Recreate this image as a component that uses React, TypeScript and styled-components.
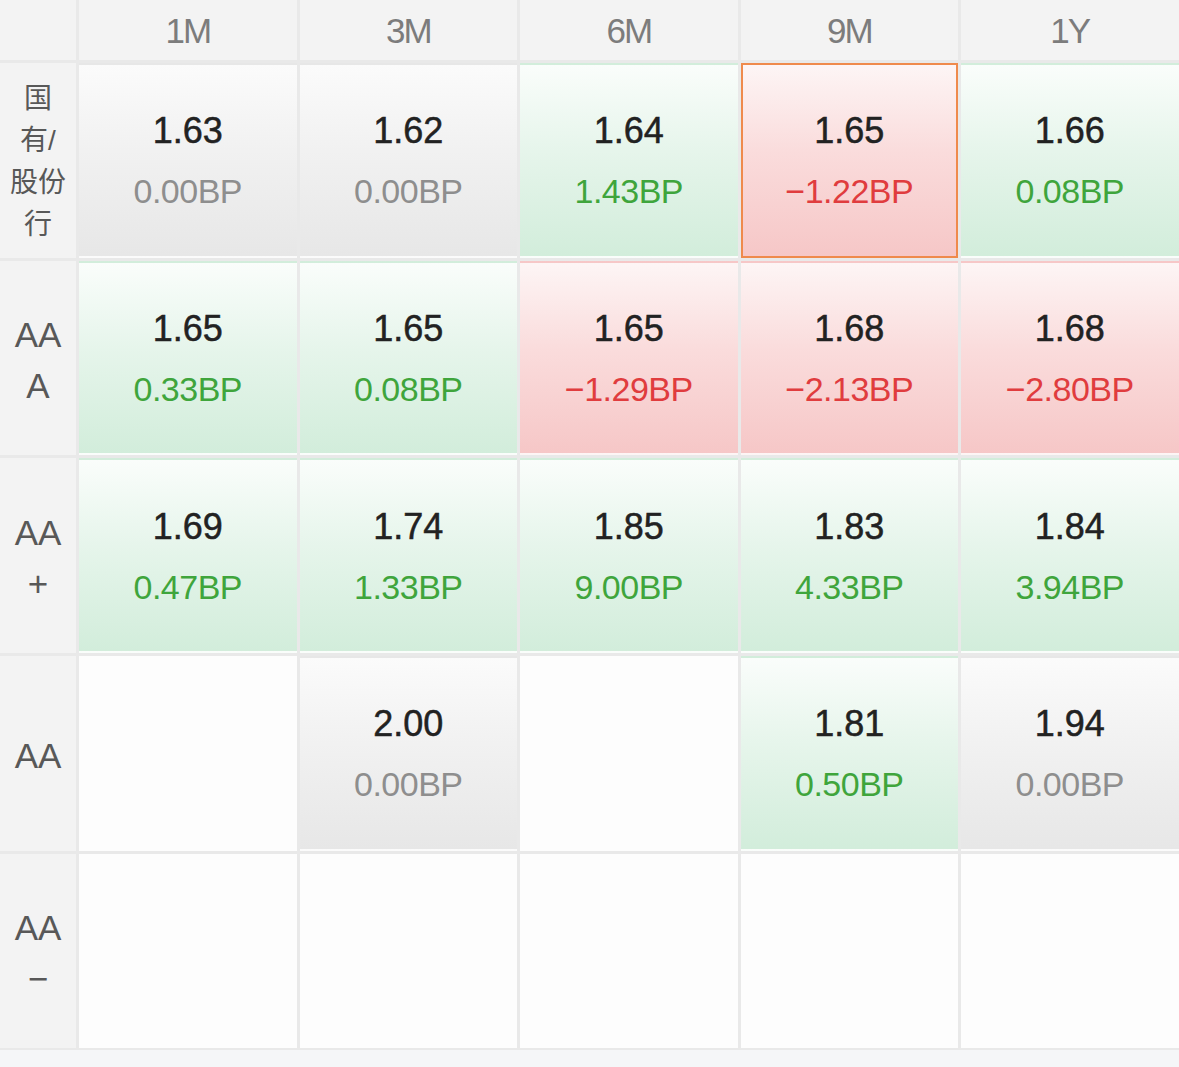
import React from 'react';
import styled, { createGlobalStyle, css } from 'styled-components';

const GlobalStyle = createGlobalStyle`
  html, body {
    margin: 0;
    padding: 0;
    background: #f5f6f8;
    font-family: "Liberation Sans", "Noto Sans CJK SC", sans-serif;
  }
`;

type Tone = 'gray' | 'green' | 'red' | 'empty';

const Page = styled.div`
  width: 1179px;
  height: 1067px;
  overflow: hidden;
  background: #f5f6f8;
`;

const Table = styled.div`
  display: grid;
  grid-template-columns: 76px repeat(5, 217.5px);
  grid-template-rows: 60px repeat(5, 194.7px);
  gap: 3px;
  background: #e9e9e9;
  padding-bottom: 2px;
`;

const Corner = styled.div`
  background: #f3f3f3;
`;

const HeaderCell = styled.div`
  background: #f3f3f3;
  display: flex;
  align-items: center;
  justify-content: center;
  font-size: 35px;
  color: #7c7c7c;
  letter-spacing: -2px;
  padding-top: 1px;
`;

const RowLabel = styled.div<{ $cjk?: boolean }>`
  background: #f3f3f3;
  display: flex;
  flex-direction: column;
  align-items: center;
  justify-content: center;
  color: #585858;
  font-size: ${(p) => (p.$cjk ? '28px' : '35px')};
  line-height: ${(p) => (p.$cjk ? '42px' : '51px')};
  padding-top: ${(p) => (p.$cjk ? '4px' : '4px')};
`;

const tones: Record<Tone, ReturnType<typeof css>> = {
  gray: css`
    background: linear-gradient(to bottom, #fbfbfb 0%, #f1f1f1 45%, #e7e7e7 100%);
  `,
  green: css`
    background: linear-gradient(to bottom, #fafdfb 0%, #e6f5eb 45%, #d2eddb 100%);
  `,
  red: css`
    background: linear-gradient(to bottom, #fdf5f5 0%, #fadcdc 45%, #f6c7c7 100%);
  `,
  empty: css`
    background: #fdfdfd;
  `,
};

const QuoteCell = styled.div<{ $tone: Tone; $selected?: boolean }>`
  box-sizing: border-box;
  display: flex;
  flex-direction: column;
  align-items: center;
  justify-content: center;
  gap: 16px;
  padding-top: 2px;
  ${(p) => tones[p.$tone]}
  border: 2px solid ${(p) => (p.$selected ? '#ef8a4c' : 'transparent')};
`;

const Rate = styled.div`
  font-size: 36px;
  line-height: 44px;
  color: #222;
  -webkit-text-stroke: 0.5px #222;
`;

const Change = styled.div<{ $dir: 'up' | 'down' | 'flat' }>`
  font-size: 34px;
  line-height: 44px;
  letter-spacing: -0.5px;
  color: ${(p) => (p.$dir === 'up' ? '#3fa53c' : p.$dir === 'down' ? '#e03c3e' : '#8e8e8e')};
`;

type Quote = { rate: string; bp: number; selected?: boolean } | null;

const terms = ['1M', '3M', '6M', '9M', '1Y'];

const rows: { label: string[]; cjk?: boolean; quotes: Quote[] }[] = [
  {
    label: ['国', '有/', '股份', '行'],
    cjk: true,
    quotes: [
      { rate: '1.63', bp: 0 },
      { rate: '1.62', bp: 0 },
      { rate: '1.64', bp: 1.43 },
      { rate: '1.65', bp: -1.22, selected: true },
      { rate: '1.66', bp: 0.08 },
    ],
  },
  {
    label: ['AA', 'A'],
    quotes: [
      { rate: '1.65', bp: 0.33 },
      { rate: '1.65', bp: 0.08 },
      { rate: '1.65', bp: -1.29 },
      { rate: '1.68', bp: -2.13 },
      { rate: '1.68', bp: -2.8 },
    ],
  },
  {
    label: ['AA', '+'],
    quotes: [
      { rate: '1.69', bp: 0.47 },
      { rate: '1.74', bp: 1.33 },
      { rate: '1.85', bp: 9.0 },
      { rate: '1.83', bp: 4.33 },
      { rate: '1.84', bp: 3.94 },
    ],
  },
  {
    label: ['AA'],
    quotes: [null, { rate: '2.00', bp: 0 }, null, { rate: '1.81', bp: 0.5 }, { rate: '1.94', bp: 0 }],
  },
  {
    label: ['AA', '−'],
    quotes: [null, null, null, null, null],
  },
];

const formatBp = (bp: number) => (bp < 0 ? `−${Math.abs(bp).toFixed(2)}BP` : `${bp.toFixed(2)}BP`);

const App: React.FC = () => {
  return (
    <Page>
      <GlobalStyle />
      <Table>
        <Corner />
        {terms.map((t) => (
          <HeaderCell key={t}>{t}</HeaderCell>
        ))}
        {rows.map((row, ri) => (
          <React.Fragment key={ri}>
            <RowLabel $cjk={row.cjk}>
              {row.label.map((line, li) => (
                <span key={li}>{line}</span>
              ))}
            </RowLabel>
            {row.quotes.map((q, ci) => {
              if (!q) return <QuoteCell key={ci} $tone="empty" />;
              const dir = q.bp > 0 ? 'up' : q.bp < 0 ? 'down' : 'flat';
              const tone: Tone = dir === 'up' ? 'green' : dir === 'down' ? 'red' : 'gray';
              return (
                <QuoteCell key={ci} $tone={tone} $selected={q.selected}>
                  <Rate>{q.rate}</Rate>
                  <Change $dir={dir}>{formatBp(q.bp)}</Change>
                </QuoteCell>
              );
            })}
          </React.Fragment>
        ))}
      </Table>
    </Page>
  );
};

export default App;
